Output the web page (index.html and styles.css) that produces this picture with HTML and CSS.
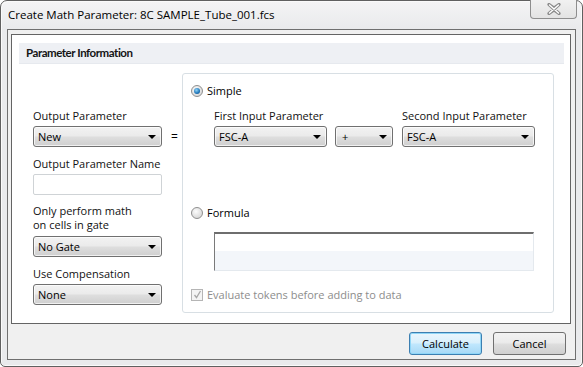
FILE: index.html
```html
<!DOCTYPE html>
<html>
<head>
<meta charset="utf-8">
<link rel="stylesheet" href="styles.css">
</head>
<body>
<div class="window">
  <div class="titlebar">
    <span class="title">Create Math Parameter: 8C SAMPLE_Tube_001.fcs</span>
    <div class="close">
      <svg width="16" height="12" viewBox="0 0 16 12"><path d="M3 1.5 L8 5 L13 1.5 M3 10.5 L8 7 L13 10.5 M3 1.5 L13 10.5 M13 1.5 L3 10.5" fill="none" stroke="#8a8a8a" stroke-width="3.2" stroke-linecap="round"/><path d="M3.5 2 L12.5 10 M12.5 2 L3.5 10" fill="none" stroke="#ffffff" stroke-width="1.4" stroke-linecap="round"/></svg>
    </div>
  </div>
  <div class="client">
    <div class="panel">
      <div class="band">Parameter Information</div>
      <div class="content">
        <div class="leftcol">
          <div class="label">Output Parameter</div>
          <div class="eqrow">
            <div class="dropdown wide"><span>New</span><i class="arrow"></i></div>
            <span class="eq">=</span>
          </div>
          <div class="label">Output Parameter Name</div>
          <div class="textinput"></div>
          <div class="label two">Only perform math<br>on cells in gate</div>
          <div class="dropdown wide"><span>No Gate</span><i class="arrow"></i></div>
          <div class="label">Use Compensation</div>
          <div class="dropdown wide"><span>None</span><i class="arrow"></i></div>
        </div>
        <div class="groupbox">
          <div class="radiorow">
            <span class="radio on"><span class="dot"></span></span>
            <span>Simple</span>
          </div>
          <div class="inputs">
            <div class="field">
              <div class="label">First Input Parameter</div>
              <div class="dropdown first"><span>FSC-A</span><i class="arrow"></i></div>
            </div>
            <div class="field">
              <div class="label">&nbsp;</div>
              <div class="dropdown op"><span class="plus">+</span><i class="arrow"></i></div>
            </div>
            <div class="field">
              <div class="label">Second Input Parameter</div>
              <div class="dropdown second"><span>FSC-A</span><i class="arrow"></i></div>
            </div>
          </div>
          <div class="radiorow formula">
            <span class="radio"></span>
            <span>Formula</span>
          </div>
          <div class="formulabox"></div>
          <div class="checkrow">
            <span class="checkbox">
              <svg width="9" height="9" viewBox="0 0 9 9"><path d="M1.5 5 L3.5 7.5 L7.5 1" fill="none" stroke="#a8a8a8" stroke-width="1.3"/></svg>
            </span>
            <span>Evaluate tokens before adding to data</span>
          </div>
        </div>
      </div>
    </div>
    <div class="buttons">
      <div class="btn default">Calculate</div>
      <div class="btn">Cancel</div>
    </div>
  </div>
</div>
</body>
</html>
```

FILE: styles.css
```css
* { box-sizing: border-box; }
html, body { margin: 0; padding: 0; }
body {
  width: 583px;
  height: 367px;
  font-family: "Open Sans", "Noto Sans", sans-serif;
  font-size: 11px;
  color: #000;
  background: #ffffff;
}
.window {
  width: 583px;
  height: 367px;
  border: 1px solid #606060;
  border-radius: 7px 7px 5px 5px;
  background: linear-gradient(#f4f4f5 0px, #e9eaec 28px, #e9eaec 100%);
  display: flex;
  flex-direction: column;
  box-shadow: inset 1px 1px 0 #fafafa, inset -1px -1px 0 #fafafa;
}
.titlebar {
  height: 28px;
  flex: none;
  display: flex;
  align-items: flex-start;
  position: relative;
}
.title {
  margin-left: 7px;
  margin-top: 7px;
  font-size: 11.5px;
  line-height: 14px;
  color: #000;
}
.close {
  position: absolute;
  right: 5px;
  top: -1px;
  width: 47px;
  height: 19px;
  border: 1px solid #8e8e8e;
  border-top: none;
  border-radius: 0 0 4px 4px;
  background: linear-gradient(#f1f1f1, #e3e3e3);
  display: flex;
  align-items: center;
  justify-content: center;
}
.client {
  flex: 1;
  margin: 0 6px 6px 6px;
  border: 1px solid #6f6f6f;
  background: #f0f0f0;
  padding: 4px 4px 4px 3px;
  display: flex;
  flex-direction: column;
}
.panel {
  flex: 1;
  border: 1px solid #646464;
  background: #ffffff;
  padding: 8px 6px 0 7px;
  display: flex;
  flex-direction: column;
}
.band {
  height: 21px;
  background: #eef0f4;
  border-bottom: 1px solid #e6e9ee;
  font-family: Lato, "Open Sans", sans-serif;
  font-weight: bold;
  font-size: 11.5px;
  letter-spacing: -0.45px;
  line-height: 20px;
  padding-left: 7px;
  color: #141414;
}
.content {
  display: flex;
  margin-top: 9px;
  padding-left: 14px;
}
.leftcol {
  width: 149px;
  padding-top: 35px;
  display: flex;
  flex-direction: column;
}
.label {
  line-height: 15px;
  height: 15px;
  margin-bottom: 3px;
  white-space: nowrap;
  color: #111;
}
.label.two {
  height: 28px;
  line-height: 14px;
  margin-bottom: 4px;
}
.eqrow {
  display: flex;
  align-items: center;
  margin-bottom: 9px;
}
.eq {
  margin-left: 9px;
  font-size: 12px;
}
.dropdown {
  height: 21px;
  border: 1px solid #707070;
  border-radius: 3px;
  background: linear-gradient(#f2f2f2 0%, #ebebeb 45%, #dddddd 55%, #cfcfcf 100%);
  box-shadow: inset 0 0 0 1px rgba(255,255,255,0.7);
  display: flex;
  align-items: center;
  padding-left: 4px;
  position: relative;
  font-size: 11px;
}
.dropdown.wide { width: 129px; margin-bottom: 9px; }
.leftcol > .dropdown.wide:last-child { margin-bottom: 0; }
.arrow {
  position: absolute;
  right: 5px;
  top: 8px;
  width: 0;
  height: 0;
  border-left: 4px solid transparent;
  border-right: 4px solid transparent;
  border-top: 4px solid #000;
}
.eqrow .dropdown.wide { margin-bottom: 0; }
.textinput {
  width: 129px;
  height: 21px;
  border: 1px solid #cfd3d6;
  border-radius: 2px;
  background: #fff;
  margin-bottom: 9px;
}
.groupbox {
  width: 372px;
  height: 240px;
  border: 1px solid #d8dfe4;
  border-radius: 3px;
  padding: 9px 8px 0 8px;
  display: flex;
  flex-direction: column;
}
.radiorow {
  display: flex;
  align-items: center;
  height: 15px;
  gap: 4px;
}
.radio {
  width: 12px;
  height: 12px;
  border-radius: 50%;
  border: 1px solid #8f8f8f;
  background: radial-gradient(circle at 40% 35%, #fcfcfc 0%, #e2e2e2 55%, #cfcfcf 100%);
  display: flex;
  align-items: center;
  justify-content: center;
  flex: none;
}
.radio .dot {
  width: 6px;
  height: 6px;
  border-radius: 50%;
  background: radial-gradient(circle at 40% 35%, #8fd3f7 0%, #1f75b8 60%, #0b3f78 100%);
}
.inputs {
  display: flex;
  margin-top: 10px;
  margin-left: 23px;
  gap: 8px;
}
.field .label { margin-bottom: 3px; }
.dropdown.first { width: 113px; }
.dropdown.op { width: 58px; margin-right: 1px; }
.dropdown.second { width: 133px; }
.plus { margin-left: 2px; }
.radiorow.formula { margin-top: 58px; }
.formulabox {
  margin-top: 12px;
  margin-left: 23px;
  width: 320px;
  height: 39px;
  border-top: 2px solid #6e6e6e;
  border-left: 1px solid #7a7a7a;
  border-right: 1px solid #e4e9ee;
  border-bottom: 1px solid #e4e9ee;
  background: linear-gradient(#ffffff 0%, #ffffff 47%, #f3f6fa 47%, #f3f6fa 100%);
}
.checkrow {
  display: flex;
  align-items: center;
  height: 15px;
  gap: 4px;
  margin-top: 16px;
  color: #8d8d8d;
}
.checkbox {
  width: 12px;
  height: 12px;
  border: 1px solid #b5b5b5;
  background: #f4f4f4;
  display: flex;
  align-items: center;
  justify-content: center;
  flex: none;
}
.buttons {
  flex: none;
  display: flex;
  justify-content: flex-end;
  gap: 11px;
  margin-top: 8px;
  padding-right: 5px;
}
.btn {
  width: 73px;
  height: 23px;
  border: 1px solid #707070;
  border-radius: 3px;
  background: linear-gradient(#f2f2f2 0%, #ebebeb 45%, #dddddd 55%, #cfcfcf 100%);
  display: flex;
  align-items: center;
  justify-content: center;
  font-size: 11px;
}
.btn.default {
  border-color: #3c7fb1;
  background: linear-gradient(#eaf6fd 0%, #d9f0fc 45%, #bee6fd 55%, #a7d9f5 100%);
  box-shadow: inset 0 0 0 1px #8fd6f7;
}
```
